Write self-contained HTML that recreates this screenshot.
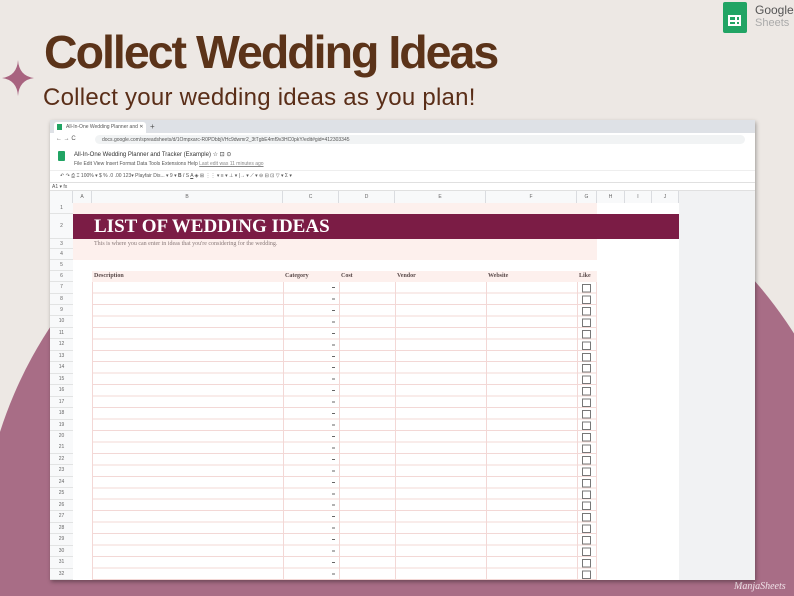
<!DOCTYPE html>
<html style="overflow:hidden;width:794px;height:596px"><head><meta charset="utf-8"><style>
*{margin:0;padding:0;box-sizing:border-box}
body{width:794px;height:596px;overflow:hidden;background:#ede8e4;position:relative;font-family:"Liberation Sans",sans-serif}
.a{position:absolute}
.clip{position:absolute;left:0;top:0;width:794px;height:596px;overflow:hidden}
.circ{position:absolute;left:-20px;top:130px;width:880px;height:860px;border-radius:50%;background:#a86d86}
.bot{position:absolute;left:0;top:560px;width:794px;height:36px;background:#a86d86}
h1{position:absolute;left:44px;top:25px;font-size:46.5px;font-weight:bold;color:#5b3319;letter-spacing:-2px;white-space:nowrap}
.sub{position:absolute;left:43px;top:84px;font-size:24px;letter-spacing:.25px;color:#5a2e18;white-space:nowrap}
.win{position:absolute;left:50px;top:120px;width:705px;height:460px;background:#fff;overflow:hidden;box-shadow:1px 2px 4px rgba(0,0,0,.35)}
.t{font-size:5px;color:#555;white-space:nowrap;position:absolute}
.rn{position:absolute;left:0;width:23px;font-size:5px;color:#666;text-align:center;background:#f8f9fa;border-bottom:1px solid #e2e3e3}
.ch{position:absolute;top:71px;height:12px;font-size:5px;color:#666;text-align:center;line-height:12px;border-right:1px solid #dadce0;background:#f8f9fa}
.vl{position:absolute;top:162px;height:298px;width:1px;background:#f3d8d6}
.hd{position:absolute;top:153px;font-family:"Liberation Serif",serif;font-weight:bold;font-size:6px;color:#5a4a4a}
</style></head><body>
<div class="clip"><div class="circ"></div><div class="bot"></div></div>
<svg class="a" style="left:2px;top:60px" width="32" height="36" viewBox="0 0 32 36"><path d="M16 0 Q17 16 32 18 Q17 20 16 36 Q15 20 0 18 Q15 16 16 0Z" fill="#a8637f"/></svg>
<h1>Collect Wedding Ideas</h1>
<div class="sub">Collect your wedding ideas as you plan!</div>
<div class="a" style="left:723px;top:2px;width:24px;height:31px;background:#21a464;border-radius:2px"></div>
<div class="a" style="left:728px;top:15px;width:13px;height:11px;border:2px solid #fff;background:linear-gradient(#fff,#fff) 5px 0/2px 100% no-repeat,linear-gradient(#fff,#fff) 0 3px/100% 2px no-repeat"></div>
<div class="a" style="left:755px;top:3px;font-size:12px;color:#555">Google</div>
<div class="a" style="left:755px;top:17px;font-size:11px;color:#aaa">Sheets</div>
<div class="a" style="left:734px;top:581px;font-size:10px;font-style:italic;color:#f1e4ea;font-family:'Liberation Serif',serif">ManjaSheets</div>

<div class="win">
<div class="a" style="left:0;top:0;width:705px;height:13px;background:#dee1e6"></div>
<div class="a" style="left:4px;top:2px;width:92px;height:11px;background:#fff;border-radius:3px 3px 0 0"></div>
<div class="a" style="left:7px;top:4px;width:5px;height:6px;background:#21a464"></div>
<div class="t" style="left:16px;top:4px">All-In-One Wedding Planner and ✕</div>
<div class="t" style="left:100px;top:2px;font-size:8px">+</div>
<div class="t" style="left:6px;top:16px;font-size:6px">←  →  C</div>
<div class="a" style="left:45px;top:15px;width:650px;height:9px;background:#f1f3f4;border-radius:5px"></div>
<div class="t" style="left:52px;top:17px">docs.google.com/spreadsheets/d/1Ompxarc-R0PDbbjVHc9dwmr2_3tTgbE4mf9v3HC0pkY/edit#gid=412303345</div>
<div class="a" style="left:8px;top:31px;width:7px;height:10px;background:#21a464;border-radius:1px"></div>
<div class="t" style="left:24px;top:31px;font-size:6px;color:#333">All-In-One Wedding Planner and Tracker (Example)   ☆ ⊡ ⊙</div>
<div class="t" style="left:24px;top:41px">File   Edit   View   Insert   Format   Data   Tools   Extensions   Help     <u style="color:#888">Last edit was 11 minutes ago</u></div>
<div class="a" style="left:0;top:50px;width:705px;height:11px;background:#fff;border-top:1px solid #eee"></div>
<div class="t" style="left:10px;top:53px">↶ ↷ ⎙ ⌶   100% ▾   $  %  .0  .00  123▾   Playfair Dis... ▾   9   ▾   <b>B</b>  <i>I</i>  S  <u>A</u>   ◈  ⊞  ⋮⋮ ▾   ≡ ▾  ⊥ ▾  |→ ▾  ⟋ ▾   ⊖  ⊟  ⊡  ▽ ▾  Σ ▾</div>
<div class="a" style="left:0;top:62px;width:705px;height:9px;border-top:1px solid #e0e0e0;border-bottom:1px solid #e0e0e0"></div>
<div class="t" style="left:2px;top:64px">A1         ▾  fx</div>
<div class="a" style="left:629px;top:71px;width:76px;height:389px;background:#f1f2f3"></div>
<div class="ch" style="left:0;width:23px"></div>
<div class="ch" style="left:23px;width:19px">A</div>
<div class="ch" style="left:42px;width:191px">B</div>
<div class="ch" style="left:233px;width:56px">C</div>
<div class="ch" style="left:289px;width:56px">D</div>
<div class="ch" style="left:345px;width:91px">E</div>
<div class="ch" style="left:436px;width:91px">F</div>
<div class="ch" style="left:527px;width:20px">G</div>
<div class="ch" style="left:547px;width:28px">H</div>
<div class="ch" style="left:575px;width:27px">I</div>
<div class="ch" style="left:602px;width:27px">J</div>
<div class="a" style="left:23px;top:83px;width:524px;height:11px;background:#fdf0ed"></div>
<div class="a" style="left:23px;top:94px;width:606px;height:25px;background:#7b1c45"></div>
<div class="a" style="left:44px;top:96px;font-family:'Liberation Serif',serif;font-weight:bold;font-size:19px;color:#fff;white-space:nowrap">LIST OF WEDDING IDEAS</div>
<div class="a" style="left:23px;top:119px;width:524px;height:21px;background:#fdf0ed"></div>
<div class="a" style="left:44px;top:121px;font-family:'Liberation Serif',serif;font-size:6px;color:#8a7a7a;white-space:nowrap">This is where you can enter in ideas that you're considering for the wedding.</div>
<div class="a" style="left:42px;top:151px;width:505px;height:11px;background:#fdf0ed"></div>
<div class="hd" style="left:44px">Description</div><div class="hd" style="left:235px">Category</div><div class="hd" style="left:291px">Cost</div><div class="hd" style="left:347px">Vendor</div><div class="hd" style="left:438px">Website</div><div class="hd" style="left:529px">Like</div>
<div class="a" style="left:42px;top:162px;width:505px;height:298px;background:repeating-linear-gradient(#fff 0,#fff 10.46px,#f3d8d6 10.46px,#f3d8d6 11.46px)"></div>
<div class="vl" style="left:42px"></div><div class="vl" style="left:233px"></div><div class="vl" style="left:289px"></div><div class="vl" style="left:345px"></div><div class="vl" style="left:436px"></div><div class="vl" style="left:527px"></div><div class="vl" style="left:546px"></div>
<div class="rn" style="top:83px;height:11px;line-height:11px">1</div>
<div class="rn" style="top:94px;height:25px;line-height:25px">2</div>
<div class="rn" style="top:119px;height:10px;line-height:10px">3</div>
<div class="rn" style="top:129px;height:11px;line-height:11px">4</div>
<div class="rn" style="top:140px;height:11px;line-height:11px">5</div>
<div class="rn" style="top:151px;height:11px;line-height:11px">6</div>
<div class="rn" style="top:162px;height:11.5px;line-height:11px">7</div>
<div class="rn" style="top:173.5px;height:11.5px;line-height:11px">8</div>
<div class="rn" style="top:184.9px;height:11.5px;line-height:11px">9</div>
<div class="rn" style="top:196.4px;height:11.5px;line-height:11px">10</div>
<div class="rn" style="top:207.8px;height:11.5px;line-height:11px">11</div>
<div class="rn" style="top:219.3px;height:11.5px;line-height:11px">12</div>
<div class="rn" style="top:230.8px;height:11.5px;line-height:11px">13</div>
<div class="rn" style="top:242.2px;height:11.5px;line-height:11px">14</div>
<div class="rn" style="top:253.7px;height:11.5px;line-height:11px">15</div>
<div class="rn" style="top:265.1px;height:11.5px;line-height:11px">16</div>
<div class="rn" style="top:276.6px;height:11.5px;line-height:11px">17</div>
<div class="rn" style="top:288.1px;height:11.5px;line-height:11px">18</div>
<div class="rn" style="top:299.5px;height:11.5px;line-height:11px">19</div>
<div class="rn" style="top:311px;height:11.5px;line-height:11px">20</div>
<div class="rn" style="top:322.4px;height:11.5px;line-height:11px">21</div>
<div class="rn" style="top:333.9px;height:11.5px;line-height:11px">22</div>
<div class="rn" style="top:345.4px;height:11.5px;line-height:11px">23</div>
<div class="rn" style="top:356.8px;height:11.5px;line-height:11px">24</div>
<div class="rn" style="top:368.3px;height:11.5px;line-height:11px">25</div>
<div class="rn" style="top:379.7px;height:11.5px;line-height:11px">26</div>
<div class="rn" style="top:391.2px;height:11.5px;line-height:11px">27</div>
<div class="rn" style="top:402.7px;height:11.5px;line-height:11px">28</div>
<div class="rn" style="top:414.1px;height:11.5px;line-height:11px">29</div>
<div class="rn" style="top:425.6px;height:11.5px;line-height:11px">30</div>
<div class="rn" style="top:437px;height:11.5px;line-height:11px">31</div>
<div class="rn" style="top:448.5px;height:11.5px;line-height:11px">32</div>
<div class="a" style="left:532px;top:163px;width:1px;height:298px;background:repeating-linear-gradient(transparent 0,transparent 1px,#777 1px,#777 9.5px,transparent 9.5px,transparent 11.46px)"></div>
<div class="a" style="left:540px;top:163px;width:1px;height:298px;background:repeating-linear-gradient(transparent 0,transparent 1px,#777 1px,#777 9.5px,transparent 9.5px,transparent 11.46px)"></div>
<div class="a" style="left:532px;top:163px;width:9px;height:298px;background:repeating-linear-gradient(transparent 0,transparent 1px,#777 1px,#777 2px,transparent 2px,transparent 8.5px,#777 8.5px,#777 9.5px,transparent 9.5px,transparent 11.46px)"></div>
<div class="a" style="left:282px;top:162px;width:3px;height:298px;background:repeating-linear-gradient(transparent 0,transparent 5px,#666 5px,#666 6px,transparent 6px,transparent 11.46px)"></div>
</div>
</body></html>
